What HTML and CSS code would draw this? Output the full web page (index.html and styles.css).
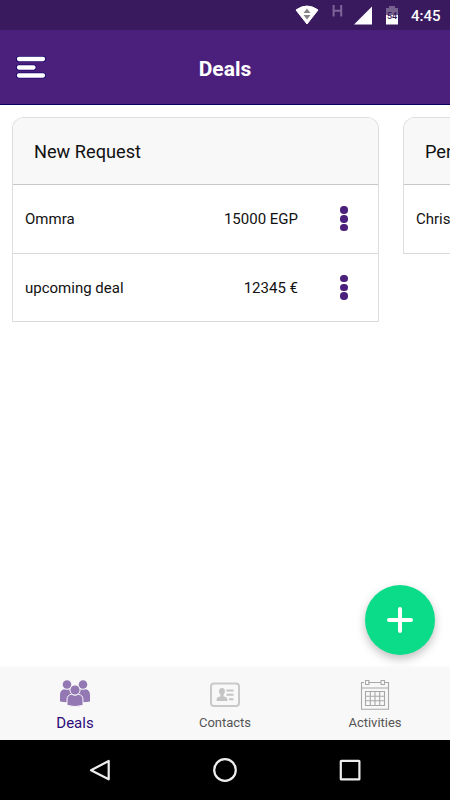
FILE: index.html
```html
<!DOCTYPE html>
<html lang="en">
<head>
<meta charset="utf-8">
<title>Deals</title>
<link rel="stylesheet" href="styles.css">
</head>
<body>
<div class="app">
  <div class="status">
    <svg class="status-icons" width="110" height="30" viewBox="0 0 110 30">
      <path d="M2 10Q13 2 24 10L13 24Z" fill="#fff" stroke="#fff" stroke-linejoin="round"/>
      <path d="M9.5 13L13 8.5L16.5 13ZM9.5 15L13 19.5L16.5 15Z" fill="#858585"/>
      <path d="M39.6 5V16.5M47.2 5V16.5M39.5 10.8H47" stroke="#7d659a" stroke-width="2" fill="none"/>
      <path d="M60 24.5L78 6.5V24.5Z" fill="#fff"/>
      <path d="M92 8H95V6H101V8H104V15H92Z" fill="#77618f"/>
      <path d="M92 15H104V24.5H92Z" fill="#fff"/>
      <text x="98" y="18.5" class="battery" text-anchor="middle">54</text>
    </svg>
    <span class="time">4:45</span>
  </div>
  <header class="header">
    <svg class="menu" width="30" height="24" viewBox="0 0 30 24">
      <g fill="none" stroke-linecap="round"><path d="M3 3H27M3 11.5H17.5M3 19.5H27" stroke="#1a0870" stroke-width="6"/><path d="M3 3H27M3 11.5H17.5M3 19.5H27" stroke="#fff" stroke-width="4.3"/></g>
    </svg>
    <h1 class="title">Deals</h1>
  </header>
  <main class="board">
    <section class="column">
      <h2 class="column-title">New Request</h2>
      <div class="deal"><span>Ommra</span><span class="amount">15000 EGP</span><span class="dots"><i></i><i></i><i></i></span></div>
      <div class="deal"><span>upcoming deal</span><span class="amount">12345 €</span><span class="dots"><i></i><i></i><i></i></span></div>
    </section>
    <section class="column">
      <h2 class="column-title">Pending</h2>
      <div class="deal"><span>Christian</span></div>
    </section>
  </main>
  <button class="add" aria-label="Add deal"><svg width="28" height="28" viewBox="0 0 28 28"><path d="M14 3V25M3 14H25" stroke="#fff" stroke-width="4" stroke-linecap="round"/></svg></button>
  <nav class="tabs">
    <div class="tab active">
      <svg width="32" height="32" viewBox="0 0 32 32" fill="#9378b3">
        <circle cx="8" cy="6.5" r="4.3"/><circle cx="24" cy="6.5" r="4.3"/>
        <path d="M1 23.5V17Q1 11.8 5.5 11.2Q8 12.5 10.5 11.2L16 15L21.5 11.2Q24 12.5 26.5 11.2Q31 11.8 31 17V23.5Q27 24.5 22 24.3H10Q5 24.5 1 23.5Z"/>
        <path d="M8 27.4V22Q8 17 12.3 16.3Q16 18 19.7 16.3Q24 17 24 22V27.4Q16 29.7 8 27.4Z" stroke="#f8f8f8" stroke-width="1"/>
        <circle cx="16" cy="12" r="5.1" stroke="#f8f8f8" stroke-width="1"/>
      </svg>
      <span>Deals</span>
    </div>
    <div class="tab">
      <svg width="32" height="32" viewBox="0 0 32 32">
        <rect x="2" y="5.5" width="28" height="22.5" rx="3" fill="none" stroke="#c9c9c9" stroke-width="2"/>
        <path d="M13 10C9.5 10 9.3 14.5 11.5 16.7V18.2L8.3 19.5Q7.5 20.3 7.5 23H18.5Q18.5 20.3 17.7 19.5L14.5 18.2V16.7C16.7 14.5 16.5 10 13 10Z" fill="#c4c4c4"/>
        <path d="M17.5 12.5H24.5M17.5 16.8H24.5M20 21.2H24.5" stroke="#c4c4c4" stroke-width="2"/>
      </svg>
      <span>Contacts</span>
    </div>
    <div class="tab">
      <svg width="32" height="32" viewBox="0 0 32 32" fill="none" stroke="#a8a8a8">
        <path d="M5 4.5H2.5V31.3H29.5V4.5H26M9 4.5H22M2.5 10H29.5" stroke-width="1.1"/>
        <rect x="6.5" y="2.5" width="3.5" height="4"/><rect x="22" y="2.5" width="3.5" height="4"/>
        <path d="M6.5 13.5H25.5V27.5H6.5ZM6.5 18.2H25.5M6.5 22.8H25.5M11.3 13.5V27.5M16 13.5V27.5M20.7 13.5V27.5" stroke-width="1.1"/>
      </svg>
      <span>Activities</span>
    </div>
  </nav>
  <div class="system">
    <svg width="28" height="28" viewBox="0 0 28 28"><path d="M22.7 5V23.3L5 14.2Z"/></svg>
    <svg width="28" height="28" viewBox="0 0 28 28"><circle cx="14" cy="14" r="10.8"/></svg>
    <svg width="28" height="28" viewBox="0 0 28 28"><rect x="4.8" y="4.8" width="18.6" height="18.6" rx=".5"/></svg>
  </div>
</div>
</body>
</html>
```
FILE: styles.css
```css
* { box-sizing: border-box; }
body { margin: 0; font-family: Roboto, sans-serif; color: #111; background: #fff; }
.app { position: relative; width: 450px; height: 800px; display: flex; flex-direction: column; overflow: hidden; }
.status { height: 30px; background: #3a1a5e; display: flex; justify-content: flex-end; align-items: center; padding-right: 10px; gap: 7px; }
.status-icons { display: block; }
.battery { font-size: 9px; font-weight: 500; fill: #3a1a5e; }
.time { color: #fff; font-size: 15px; font-weight: 500; line-height: 30px; padding-top: 1px; width: 29px; white-space: nowrap; }
.header { height: 75px; background: #4b207c; border-bottom: 1px solid #09005e; display: grid; grid-template-columns: 60px 1fr 60px; align-items: center; }
.menu { margin: 2px 0 0 16px; }
.title { margin: 3px 0 0; color: #fff; font-size: 21px; font-weight: 700; text-align: center; }
.board { flex: 1; display: flex; align-items: flex-start; gap: 24px; padding: 12px 0 0 12px; overflow: hidden; }
.column { flex: 0 0 367px; border: 1px solid #dedede; border-bottom: 0; border-radius: 12px 12px 0 0; }
.column-title { margin: 0; height: 67px; padding-left: 21px; background: #f8f8f8; border-bottom: 1px solid #c8c8c8; border-radius: 11px 11px 0 0; font-size: 18.2px; font-weight: 400; line-height: 68px; }
.deal { height: 68.5px; padding: 1px 30px 0 12px; border-bottom: 1px solid #dadada; display: flex; align-items: center; font-size: 15px; }
.amount { margin-left: auto; }
.dots { display: flex; flex-direction: column; align-items: center; gap: 1.2px; margin: -1px 0 0 42px; width: 8px; }
.dots i { width: 7.5px; height: 7.5px; border-radius: 50%; background: #4b207c; }
.add { position: absolute; left: 365px; top: 585px; width: 70px; height: 70px; padding: 0; border: 0; border-radius: 50%; background: #0bdc89; display: flex; align-items: center; justify-content: center; box-shadow: 0 4px 10px rgba(0,0,0,.25); }
.tabs { height: 72px; background: #f8f8f8; box-shadow: 0 -1px 3px rgba(0,0,0,.04); display: grid; grid-template-columns: repeat(3, 1fr); }
.tab { display: flex; flex-direction: column; align-items: center; padding-top: 10px; font-size: 13px; color: #555; }
.tab span { line-height: 18px; margin-top: 4px; }
.active span { font-size: 15px; color: #2c0b78; }
.system { height: 60px; background: #000; display: flex; justify-content: space-between; align-items: center; padding: 0 86px; }
.system svg { fill: none; stroke: #eee; stroke-width: 2.2; stroke-linejoin: round; }
```
